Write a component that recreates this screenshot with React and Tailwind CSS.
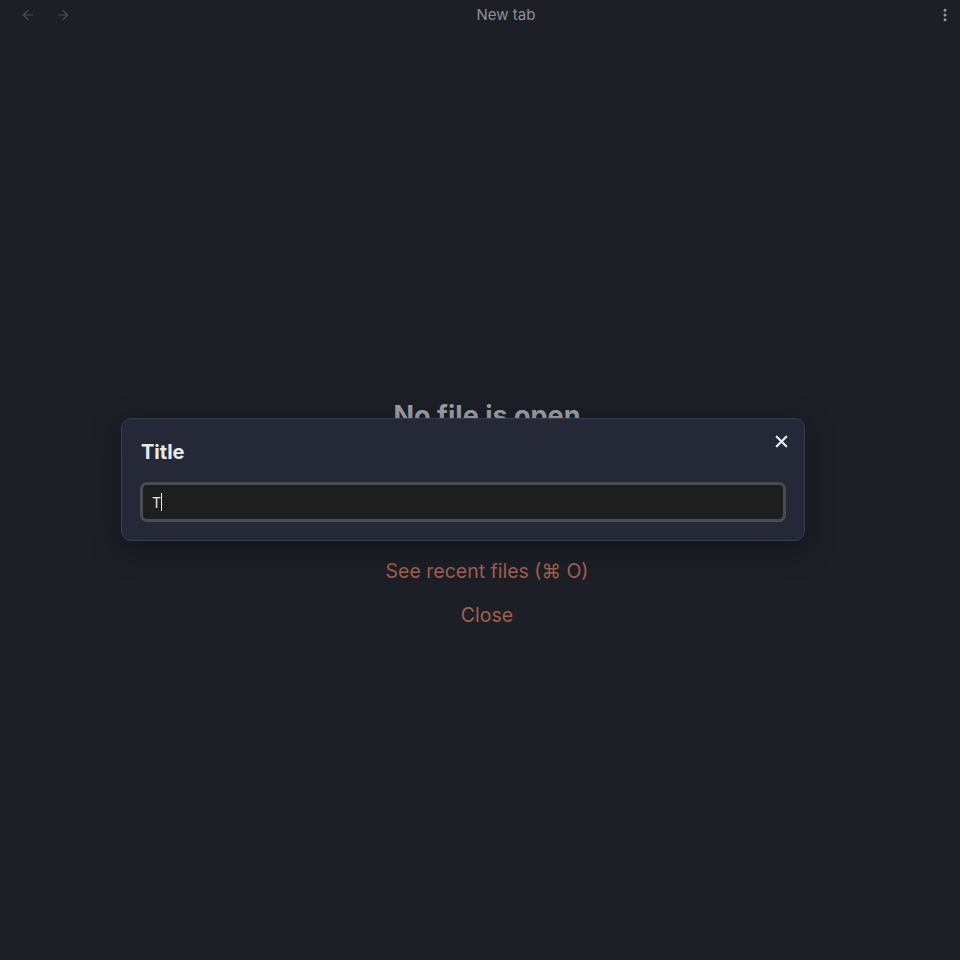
import React from 'react';
import { ArrowLeft, ArrowRight, EllipsisVertical, X } from 'lucide-react';

const font = { fontFamily: 'Inter, "Noto Sans", sans-serif' };

const TopBar = () => (
  <div className="flex items-center h-[30px]">
    <div className="w-[84px] flex items-center gap-[19px] pl-[20px]">
      <ArrowLeft className="w-4 h-4 text-[#4a4e57]" strokeWidth={1.75} />
      <ArrowRight className="w-4 h-4 text-[#4a4e57]" strokeWidth={1.75} />
    </div>
    <div className="flex-1 text-center text-[15px] text-[#8d9097]">New tab</div>
    <div className="w-[32px] flex justify-end pr-[7px]">
      <EllipsisVertical className="w-4 h-4 text-[#9a9ca3]" strokeWidth={2.5} />
    </div>
  </div>
);

const EmptyState = () => (
  <div className="flex flex-col items-center pl-[14px] pt-[370px]">
    <h2 className="text-[27px] leading-[32px] font-bold text-[#9b9ea5]">No file is open</h2>
    <div className="mt-[81px] flex flex-col items-center gap-[16px] text-[19.5px] leading-[28px] text-[#a2604d]">
      <span>Create new file (⌘ N)</span>
      <span>See recent files (⌘ O)</span>
      <span>Close</span>
    </div>
  </div>
);

const TitleModal = () => (
  <div className="absolute left-[121px] top-[418px] w-[684px] rounded-[10px] border border-[#3a3e4b] bg-[#252937] px-[18px] pt-[18px] pb-[18px] shadow-[0_8px_30px_rgba(0,0,0,0.35)]">
    <button className="absolute right-[13px] top-[13px] text-[#eceef2]">
      <X className="w-[19px] h-[19px]" strokeWidth={2.75} />
    </button>
    <div className="text-[20px] leading-[30px] font-bold text-[#e8eaee] pl-[1px]">Title</div>
    <div className="mt-[15px] h-[40px] rounded-[7px] border-[3px] border-[#4b4c50] bg-[#1e1e1f] flex items-center pl-[9px]">
      <span className="text-[14px] text-[#e6e6e6]">T</span>
      <span className="w-px h-[18px] bg-[#e6e6e6]" />
    </div>
  </div>
);

export default function App() {
  return (
    <div className="relative w-[960px] h-[960px] overflow-hidden bg-[#1c1f26]" style={font}>
      <TopBar />
      <EmptyState />
      <TitleModal />
    </div>
  );
}
